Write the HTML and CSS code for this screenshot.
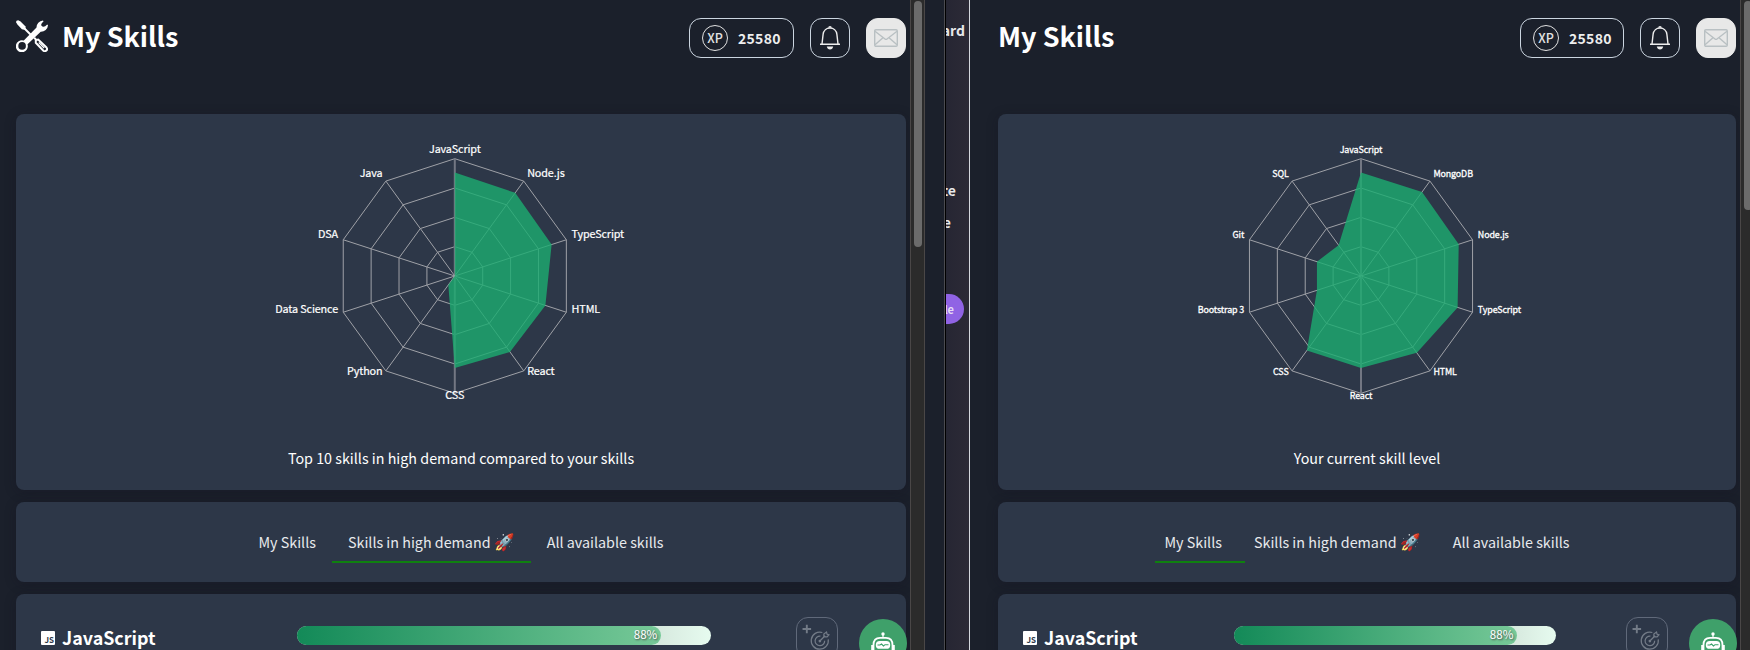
FILE: index.html
```html
<!DOCTYPE html>
<html lang="en">
<head>
<meta charset="utf-8">
<title>My Skills</title>
<link rel="stylesheet" href="styles.css">
</head>
<body>
<svg class="defs" width="0" height="0">
  <symbol id="tools" viewBox="0 0 32 32">
    <path d="M8.5 8.5L15 15" fill="none" stroke="currentColor" stroke-width="2"/>
    <path d="M0 2.2 Q0 .3 2.2 .2 L4.6 1.5 L9.3 6.2 L9.8 8.4 L8.2 9.7 L5.9 9.2 L1.6 4.8Z" fill="currentColor"/>
    <path d="M20.5 7.5 A7 7 0 0 1 26.9 .5 L27.6 1.2 Q24.6 3.7 25.3 5.6 L26.8 6.8 Q28.8 7.3 31.2 4.4 L32 5.2 A7 7 0 0 1 24.7 11.7 L11.5 24.3 A6 6 0 1 1 7.8 20.6Z" fill="currentColor"/>
    <circle class="hole" cx="6.1" cy="25.9" r="3.8"/>
    <path d="M18.2 17.8 L20.8 20.4" stroke="currentColor" stroke-width="2"/>
    <path d="M19.8 22.8 L19.8 20 L22.2 19.6 L30.5 27.5 Q31.8 29.2 30.4 30.4 Q28.9 31.8 27.4 30.7Z" fill="none" stroke="currentColor" stroke-width="2"/>
    <path d="M22.8 22.5 L28.2 28" stroke="currentColor" stroke-width="1.3"/>
  </symbol>
  <symbol id="bell" viewBox="0 0 20 24">
    <path d="M0 18.3H20M2 18L3.1 8.4C3.5 4.3 6.5 2 10 2S16.5 4.3 16.9 8.4L18 18" fill="none" stroke="currentColor" stroke-width="1.4"/>
    <path d="M8.2 1.8A1.8 1.8 0 0 1 11.8 1.8ZM6.8 20.6H13.2Q12.6 23.6 10 23.6Q7.4 23.6 6.8 20.6Z" fill="currentColor"/>
  </symbol>
  <symbol id="mail" viewBox="0 0 24 18">
    <rect x=".7" y=".7" width="22.6" height="16.6" rx="1.2" fill="none" stroke="currentColor" stroke-width="1.4"/>
    <path d="M1 2.3L11 10Q12 10.8 13 10L23 2.3M1 15.8L8.7 9M23 15.8L15.3 9" fill="none" stroke="currentColor" stroke-width="1.4"/>
  </symbol>
  <symbol id="goal" viewBox="0 0 42 42">
    <path d="M10.3 7V16M5.8 11.5H14.8" stroke="currentColor" stroke-width="2" fill="none"/>
    <path d="M26.6 15.2A9 9 0 1 0 32.8 22.4M24.6 19.1A5 5 0 1 0 29 23.8M24 24.2L29.5 18.7M28.2 19.9V16.8L31 14.8L31.6 17.1L33.5 17.6L31.6 19.9Z" stroke="currentColor" stroke-width="1.3" fill="none"/>
    <circle cx="24" cy="24.2" r="1.4" fill="currentColor"/>
  </symbol>
  <symbol id="bot" viewBox="0 0 24 24">
    <circle cx="12" cy="2" r="1.7" fill="currentColor"/>
    <path d="M12 3V6" stroke="currentColor" stroke-width="1.2"/>
    <path d="M2.5 24V13Q2.5 5.8 9 5.8H15Q21.5 5.8 21.5 13V24" fill="none" stroke="currentColor" stroke-width="1.8"/>
    <path d="M.2 13H2V20H.2ZM22 13H23.8V20H22Z" fill="currentColor"/>
    <rect x="4.8" y="9" width="14.4" height="7.8" rx="3.9" fill="currentColor"/>
    <path d="M6.5 13H9L10.5 12L12.5 14L14 12.7H17.5" fill="none" stroke="#38a169" stroke-width="1.1"/>
    <path d="M6 18.5H18V24H6Z" fill="currentColor"/>
  </symbol>
</svg>

<div class="desktop">
  <section class="window window-left">
    <main class="page">
      <header class="header">
        <svg class="tools"><use href="#tools"/></svg>
        <h1 class="title">My Skills</h1>
        <div class="xp"><span class="xp-badge">XP</span><span class="xp-value">25580</span></div>
        <button class="icon-btn"><svg class="bell"><use href="#bell"/></svg></button>
        <button class="icon-btn mail-btn"><svg class="mail"><use href="#mail"/></svg></button>
      </header>
      <div class="card chart-card">
        <svg class="radar" data-cx="438.8" data-labels="JavaScript,Node.js,TypeScript,HTML,React,CSS,Python,Data Science,DSA,Java" data-values="88.3,87.6,86.8,81.2,80,78.4,9.4,0,0,0"></svg>
        <p class="caption">Top 10 skills in high demand compared to your skills</p>
      </div>
      <nav class="card tabs">
        <a class="tab">My Skills</a><a class="tab active">Skills in high demand <span class="emoji">🚀</span></a><a class="tab">All available skills</a>
      </nav>
      <div class="card skill">
        <span class="js">JS</span><h2 class="skill-name">JavaScript</h2>
        <div class="track"><div class="fill" style="width:88%">88%</div></div>
        <svg class="goal"><use href="#goal"/></svg>
      </div>
    </main>
    <div class="scrollbar"><div class="thumb"></div></div>
    <div class="bot-btn"><svg class="bot"><use href="#bot"/></svg></div>
  </section>

  <div class="gutter"></div>
  <aside class="behind">
    <span class="peek peek-a">ard</span>
    <span class="peek peek-b">te</span>
    <span class="peek peek-c">e</span>
    <span class="pill">le</span>
  </aside>

  <section class="window window-right">
    <main class="page">
      <header class="header">
        <h1 class="title">My Skills</h1>
        <div class="xp"><span class="xp-badge">XP</span><span class="xp-value">25580</span></div>
        <button class="icon-btn"><svg class="bell"><use href="#bell"/></svg></button>
        <button class="icon-btn mail-btn"><svg class="mail"><use href="#mail"/></svg></button>
      </header>
      <div class="card chart-card">
        <svg class="radar small" data-cx="363" data-labels="JavaScript,MongoDB,Node.js,TypeScript,HTML,React,CSS,Bootstrap 3,Git,SQL" data-values="88.3,88.6,87.6,86.6,81,78.4,78.5,39.5,39.5,32.5"></svg>
        <p class="caption">Your current skill level</p>
      </div>
      <nav class="card tabs">
        <a class="tab active">My Skills</a><a class="tab">Skills in high demand <span class="emoji">🚀</span></a><a class="tab">All available skills</a>
      </nav>
      <div class="card skill">
        <span class="js">JS</span><h2 class="skill-name">JavaScript</h2>
        <div class="track"><div class="fill" style="width:88%">88%</div></div>
        <svg class="goal"><use href="#goal"/></svg>
      </div>
    </main>
    <div class="scrollbar"><div class="thumb"></div></div>
    <div class="bot-btn"><svg class="bot"><use href="#bot"/></svg></div>
  </section>
</div>
<script src="radar.js"></script>
</body>
</html>
```
FILE: styles.css
```css
* { box-sizing: border-box; }
body {
  margin: 0;
  overflow: hidden;
  background: #1b202b;
  color: #fff;
  font: 14.32px/24px "Noto Sans CJK JP", "Noto Sans", sans-serif;
}
.defs { position: absolute; }
.desktop { display: flex; width: 1750px; height: 650px; overflow: hidden; }
.window { position: relative; display: flex; background: #1b202b; overflow: hidden; flex: none; }
.window-left { width: 925px; }
.window-right { width: 781px; border-left: 1px solid #d5d8de; }
.page { flex: 1; min-width: 0; display: flex; flex-direction: column; gap: 12px; }
.window-left .page { padding: 18px 4px 0 16px; }
.window-right .page { padding: 18px 4px 0 28px; }

.header { display: flex; align-items: center; height: 40px; margin-bottom: 44px; }
.tools { width: 32px; height: 32px; margin: 0 14px 4px 0; }
.hole { fill: #1b202b; }
.title { margin: 0 auto 0 0; font-size: 27px; line-height: 36px; font-weight: 700; padding-bottom: 4px; }
.xp { display: flex; align-items: center; height: 40px; width: 105px; padding-left: 12px; border: 1px solid #cbd5e0; border-radius: 12px; }
.window-right .xp { width: 104px; }
.xp-badge { display: grid; place-items: center; width: 26px; height: 26px; border: 1px solid #e2e2e2; border-radius: 50%; font-size: 12.5px; font-weight: 500; color: #e2e2e2; }
.xp-value { margin-left: 10px; font-size: 14px; font-weight: 700; letter-spacing: .3px; color: #eee; }
.icon-btn { display: grid; place-items: center; width: 40px; height: 40px; padding: 0; margin-left: 16px; border: 1px solid #cbd5e0; border-radius: 12px; background: none; color: #eee; }
.mail-btn { background: #e8e8e8; border-color: #e8e8e8; color: #b9c0c3; }
.bell { width: 20px; height: 24px; }
.mail { width: 24px; height: 18px; }

.card { background: #2d3748; border-radius: 8px; box-shadow: 0 2px 12px rgba(20, 18, 32, .3); flex: none; }
.chart-card { height: 376px; }
.radar { display: block; width: 100%; height: 332px; }
.grid { fill: none; stroke: #9fa1a7; stroke-width: 1; }
.axis { stroke: #9fa1a7; stroke-width: 1; }
.axis-v { stroke: #737783; stroke-width: 2; }
.area { fill: #1cac70; fill-opacity: .8; }
.label { fill: #fff; stroke: #fff; stroke-width: .2; font-size: 10.8px; letter-spacing: -.14px; }
.small .label { font-size: 8.9px; letter-spacing: -.1px; stroke-width: .3; }
.caption { margin: 0; text-align: center; }
.tabs { display: flex; justify-content: center; height: 80px; padding-top: 20px; }
.tab { position: relative; height: 41px; padding: 8px 16px; color: #e8eaed; white-space: nowrap; }
.emoji { font-size: 16.5px; line-height: 20px; }
.active::after { content: ""; position: absolute; left: 0; bottom: 0; width: 100%; height: 2px; background: #0f800f; }
.window-right .active::after { left: 7px; }
.skill { display: flex; height: 90px; padding-left: 25px; }
.js { width: 14px; height: 14px; margin: 37px 7px 0 0; padding: 4px 1px 0 0; background: #fff; border-radius: 1px; color: #2d3748; font-size: 8px; line-height: 10px; font-weight: 700; text-align: right; }
.skill-name { margin: 29px 0 0; width: 235px; font-size: 17.9px; line-height: 28px; font-weight: 700; }
.track { width: 414px; height: 19px; margin-top: 32px; border-radius: 10px; background: linear-gradient(90deg, #c3d2c9 70%, #e6fbef 100%); }
.window-right .skill-name { width: 190px; }
.window-right .track { width: 322px; }
.fill { height: 19px; border-radius: 10px; padding-right: 4px; background: linear-gradient(90deg, #138a58, #77c998); font-size: 11.6px; line-height: 17px; text-align: right; text-shadow: 1px 1px 2px #444; }
.goal { width: 42px; height: 42px; margin: 23px 0 0 85px; border: 1px solid #60697a; border-radius: 12px; color: #737b87; }
.window-right .goal { margin-left: 70px; }
.scrollbar { width: 15px; flex: none; background: #2b2b2b; border: solid #4a4747; border-width: 0 1px; padding: 1px 2px 0 3px; }
.window-right .scrollbar { width: 10px; border-right: 0; padding-right: 0; }
.thumb { width: 8px; height: 246px; border-radius: 4px; background: #6b6b6b; }
.window-right .thumb { height: 209px; }
.bot-btn { position: absolute; top: 619px; right: 18px; width: 48px; height: 48px; border-radius: 50%; background: #3fa06a; display: flex; justify-content: center; padding-top: 13px; }
.window-right .bot-btn { right: 13px; }
.bot { width: 24px; height: 24px; }

.gutter { width: 21px; flex: none; background: #1b202b; border-right: 1px solid #000; box-shadow: inset -1px 0 #4b4b50; }
.behind { position: relative; width: 23px; flex: none; overflow: hidden; background: linear-gradient(90deg, #262633, #2c2a36); }
.peek { position: absolute; right: 4px; font-size: 14px; font-weight: 700; line-height: 20px; color: #e8e8ea; }
.peek-a { top: 20px; }
.peek-b { top: 180px; right: 13px; }
.peek-c { top: 212px; right: 18px; }
.pill { position: absolute; top: 294px; right: 5px; width: 60px; height: 30px; border-radius: 15px; background: #9063e4; padding-right: 10px; text-align: right; font-size: 11px; line-height: 30px; font-weight: 700; color: #e5daf5; }
```
FILE: radar.js
```js
const NS = "http://www.w3.org/2000/svg";
const R = 117.3, CY = 162;

function add(svg, tag, attrs, text) {
  const el = document.createElementNS(NS, tag);
  for (const k in attrs) el.setAttribute(k, attrs[k]);
  if (text) el.textContent = text;
  svg.appendChild(el);
}

document.querySelectorAll(".radar").forEach(svg => {
  const cx = +svg.dataset.cx;
  const labels = svg.dataset.labels.split(",");
  const values = svg.dataset.values.split(",").map(Number);
  const at = (i, r) => {
    const a = i * Math.PI / 5;
    return [cx + r * Math.sin(a), CY - r * Math.cos(a)];
  };
  for (let ring = 1; ring <= 4; ring++)
    add(svg, "polygon", { class: "grid", points: labels.map((_, i) => at(i, R * ring / 4)).join(" ") });
  labels.forEach((_, i) => {
    const [x, y] = at(i, R);
    add(svg, "line", { class: i % 5 ? "axis" : "axis axis-v", x1: cx, y1: CY, x2: x, y2: y });
  });
  add(svg, "polygon", { class: "area", points: values.map((v, i) => at(i, R * v / 100)).join(" ") });
  labels.forEach((t, i) => {
    const [x, y] = at(i, R + 5);
    const side = i % 5 === 0 ? 0 : i < 5 ? 1 : -1;
    add(svg, "text", {
      class: "label", x: x + side * .5, y: i === 5 ? y + .7 : y - .3,
      "text-anchor": side === 0 ? "middle" : side > 0 ? "start" : "end"
    }, t);
  });
});
```
